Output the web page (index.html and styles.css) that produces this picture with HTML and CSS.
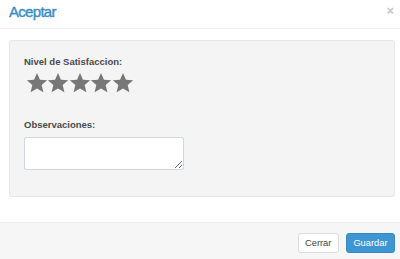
FILE: index.html
```html
<!DOCTYPE html>
<html>
<head>
<meta charset="utf-8">
<link rel="stylesheet" href="styles.css">
</head>
<body>
<div class="modal">
  <div class="modal-header">
    <h4 class="modal-title">Aceptar</h4>
    <span class="close">×</span>
  </div>
  <div class="modal-body">
    <div class="well">
      <label class="lbl">Nivel de Satisfaccion:</label>
      <div class="stars">
        <svg viewBox="0 0 24 24" class="star"><path d="M12 1.2l3.2 7.3 7.9.6-6 5.2 1.9 7.8L12 18l-7 4.1 1.9-7.8-6-5.2 7.9-.6z"/></svg>
        <svg viewBox="0 0 24 24" class="star"><path d="M12 1.2l3.2 7.3 7.9.6-6 5.2 1.9 7.8L12 18l-7 4.1 1.9-7.8-6-5.2 7.9-.6z"/></svg>
        <svg viewBox="0 0 24 24" class="star"><path d="M12 1.2l3.2 7.3 7.9.6-6 5.2 1.9 7.8L12 18l-7 4.1 1.9-7.8-6-5.2 7.9-.6z"/></svg>
        <svg viewBox="0 0 24 24" class="star"><path d="M12 1.2l3.2 7.3 7.9.6-6 5.2 1.9 7.8L12 18l-7 4.1 1.9-7.8-6-5.2 7.9-.6z"/></svg>
        <svg viewBox="0 0 24 24" class="star"><path d="M12 1.2l3.2 7.3 7.9.6-6 5.2 1.9 7.8L12 18l-7 4.1 1.9-7.8-6-5.2 7.9-.6z"/></svg>
      </div>
      <label class="lbl obs">Observaciones:</label>
      <textarea class="ta"></textarea>
    </div>
  </div>
  <div class="modal-footer">
    <button class="btn btn-default">Cerrar</button>
    <button class="btn btn-primary">Guardar</button>
  </div>
</div>
</body>
</html>
```
FILE: styles.css
```css
html, body {
  margin: 0;
  padding: 0;
  background: #fff;
  font-family: "Liberation Sans", Arial, sans-serif;
}
.modal {
  width: 400px;
  height: 259px;
  display: flex;
  flex-direction: column;
}
.modal-header {
  height: 28px;
  border-bottom: 1px solid #f0f0f0;
  display: flex;
  align-items: flex-start;
  justify-content: space-between;
  padding: 0 6px 0 9px;
}
.modal-title {
  margin: 3px 0 0;
  font-size: 15px;
  font-weight: normal;
  color: #3a8ec4;
  letter-spacing: -0.7px;
  -webkit-text-stroke: 0.4px #3a8ec4;
}
.close {
  font-size: 13px;
  font-weight: bold;
  color: #c8c8c8;
  margin-top: 3px;
}
.modal-body {
  padding: 11px 5px 0 9px;
  height: 182px;
}
.well {
  height: 157px;
  box-sizing: border-box;
  background: #f4f4f4;
  border: 1px solid #e6e6e6;
  border-radius: 3px;
  padding: 15px 14px 0 14px;
  display: flex;
  flex-direction: column;
  align-items: flex-start;
}
.lbl {
  font-size: 9.5px;
  font-weight: bold;
  color: #4a4a4a;
  line-height: 12px;
}
.stars {
  display: flex;
  margin: 4px 0 0 2px;
}
.star {
  width: 22px;
  height: 22px;
  fill: #777;
  margin-right: -0.6px;
}
.obs {
  margin-top: 25px;
}
.ta {
  margin-top: 6px;
  width: 160px;
  height: 33px;
  box-sizing: border-box;
  border: 1px solid #d2d6de;
  border-radius: 2px;
  background: #fff;
  resize: vertical;
}
.modal-footer {
  flex: 1;
  border-top: 1px solid #ececec;
  background: #f6f6f6;
  display: flex;
  justify-content: flex-end;
  align-items: flex-start;
  gap: 7px;
  padding: 10px 5px 0 0;
}
.btn {
  height: 20px;
  font-family: "Liberation Sans", Arial, sans-serif;
  font-size: 9.3px;
  border-radius: 3px;
  padding: 0 6.5px;
  line-height: 18px;
}
.btn-default {
  background: #fff;
  border: 1px solid #ddd;
  color: #444;
}
.btn-primary {
  background: #3d96d2;
  border: 1px solid #3789c0;
  color: #fff;
}
```
